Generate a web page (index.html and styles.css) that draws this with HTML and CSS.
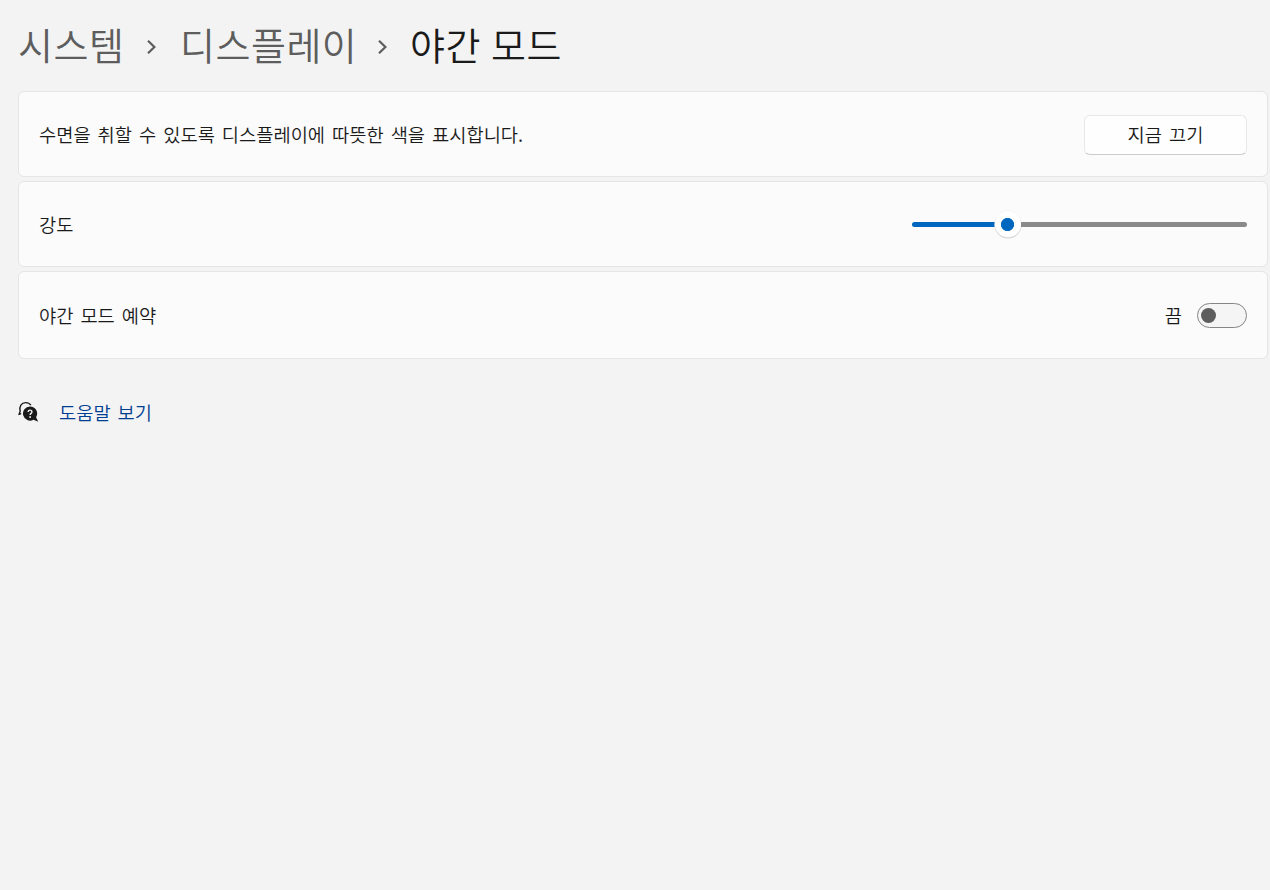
FILE: index.html
```html
<!DOCTYPE html>
<html lang="ko">
<head>
  <meta charset="UTF-8" />
  <meta name="viewport" content="width=device-width, initial-scale=1" />
  <title>야간 모드</title>
  <link rel="stylesheet" href="styles.css">
</head>
<body>

  <nav class="breadcrumb">
    <a class="crumb system">시스템</a>
    <svg class="chevron" width="10" height="16" viewBox="0 0 10 16"><path d="M2 1.8 L8.4 8 L2 14.2" /></svg>
    <a class="crumb display">디스플레이</a>
    <svg class="chevron" width="10" height="16" viewBox="0 0 10 16"><path d="M2 1.8 L8.4 8 L2 14.2" /></svg>
    <h1 class="crumb current">야간 모드</h1>
  </nav>

  <main class="settings">
    <section class="card">
      <span class="label description">수면을 취할 수 있도록 디스플레이에 따뜻한 색을 표시합니다.</span>
      <button class="btn">지금 끄기</button>
    </section>

    <section class="card">
      <span class="label">강도</span>
      <div class="slider">
        <div class="slider-fill"></div>
        <div class="slider-thumb"></div>
        <div class="slider-rest"></div>
      </div>
    </section>

    <section class="card schedule">
      <span class="label">야간 모드 예약</span>
      <div class="toggle-group">
        <span class="label">끔</span>
        <div class="toggle"><div class="toggle-knob"></div></div>
      </div>
    </section>
  </main>

  <!-- Help -->
  <footer class="help">
    <svg class="help-icon" width="22" height="22" viewBox="0 0 22 22">
      <path class="bubble-back" d="M0.4 13.6 L3.2 12.6 M1 13.4 L2.2 10.2 C0.8 5.2 3.6 1.6 7.6 1.6 C10 1.6 11.8 2.6 12.9 4.2" />
      <path class="bubble" d="M12 5.4 A7.1 7.1 0 1 0 15.5 18.7 L20.2 20.8 L18.1 16.2 A7.1 7.1 0 0 0 12 5.4 Z" />
      <path class="mark" d="M10.2 11 C10.2 8.5 13.9 8.5 13.9 10.9 C13.9 12.4 12.1 12.4 12.1 14" />
      <circle class="mark-dot" cx="12.1" cy="16" r="0.9" />
    </svg>
    <a class="label help-link">도움말 보기</a>
  </footer>

</body>
</html>
```

FILE: styles.css
```css
* {
  box-sizing: border-box;
}
body {
  margin: 0;
  padding: 20px 2px 0 18px;
  background: #f3f3f3;
  color: #1a1a1a;
  font-family: "Noto Sans CJK KR", sans-serif;
  font-weight: 350;
}

/* Breadcrumb */
.breadcrumb {
  display: flex;
  align-items: center;
  height: 48px;
  margin-bottom: 23px;
}
.crumb {
  margin: 0;
  font-size: 38px;
  font-weight: 350;
  line-height: 48px;
  letter-spacing: 0.5px;
  white-space: nowrap;
  color: #5d5d5d;
}
.system {
  width: 128px;
}
.display {
  width: 197px;
  margin-left: 24px;
}
.current {
  margin-left: 23px;
  color: #1a1a1a;
  word-spacing: -1px;
}
.chevron {
  flex: none;
  margin-top: 6px;
  fill: none;
  stroke: #5d5d5d;
  stroke-width: 2.2;
}

/* Cards */
.settings {
  display: flex;
  flex-direction: column;
  gap: 4px;
}
.card {
  display: flex;
  align-items: center;
  justify-content: space-between;
  height: 86px;
  padding: 0 20px;
  background: #fbfbfb;
  border: 1px solid #e5e5e5;
  border-radius: 6px;
}
.schedule {
  height: 88px;
}
.label {
  font-size: 18.7px;
  line-height: 26px;
  white-space: nowrap;
  word-spacing: 1.8px;
}
.btn {
  width: 163px;
  height: 40px;
  margin-top: 1px;
  padding: 0 0 2px;
  background: #fefefe;
  border: 1px solid #e8e8e8;
  border-bottom-color: #cccccc;
  border-radius: 6px;
  color: #1a1a1a;
  font-family: inherit;
  font-size: 18.7px;
  font-weight: 350;
  line-height: 26px;
  word-spacing: 1.8px;
}

/* Slider */
.slider {
  display: flex;
  align-items: center;
  width: 335px;
}
.slider-fill {
  width: 83px;
  height: 5px;
  background: #0067c0;
  border-radius: 3px 0 0 3px;
}
.slider-thumb {
  width: 26px;
  height: 26px;
  background: radial-gradient(circle at 12.5px 13.5px, #0067c0 6.2px, #ffffff 6.9px);
  border-radius: 50%;
  box-shadow: 0 0 0 0.5px #ececec, 0 1px 0 0.5px #d4d4d4;
}
.slider-rest {
  flex: 1;
  height: 5px;
  background: #8a8a8a;
  border-radius: 0 3px 3px 0;
}

/* Toggle */
.toggle-group {
  display: flex;
  align-items: center;
  gap: 15px;
}
.toggle {
  display: flex;
  align-items: center;
  width: 50px;
  height: 25px;
  padding-left: 3px;
  background: #f5f5f5;
  border: 1px solid #868686;
  border-radius: 13px;
}
.toggle-knob {
  width: 15px;
  height: 15px;
  background: #5d5d5d;
  border-radius: 50%;
}

/* Help */
.help {
  display: flex;
  align-items: center;
  margin-top: 40px;
}
.help-icon {
  margin-right: 19px;
}
.help-link {
  color: #003e92;
}
.bubble-back {
  fill: none;
  stroke: #1a1a1a;
  stroke-width: 1.4;
}
.bubble {
  fill: #1a1a1a;
}
.mark {
  fill: none;
  stroke: #f3f3f3;
  stroke-width: 1.4;
}
.mark-dot {
  fill: #f3f3f3;
}
```
